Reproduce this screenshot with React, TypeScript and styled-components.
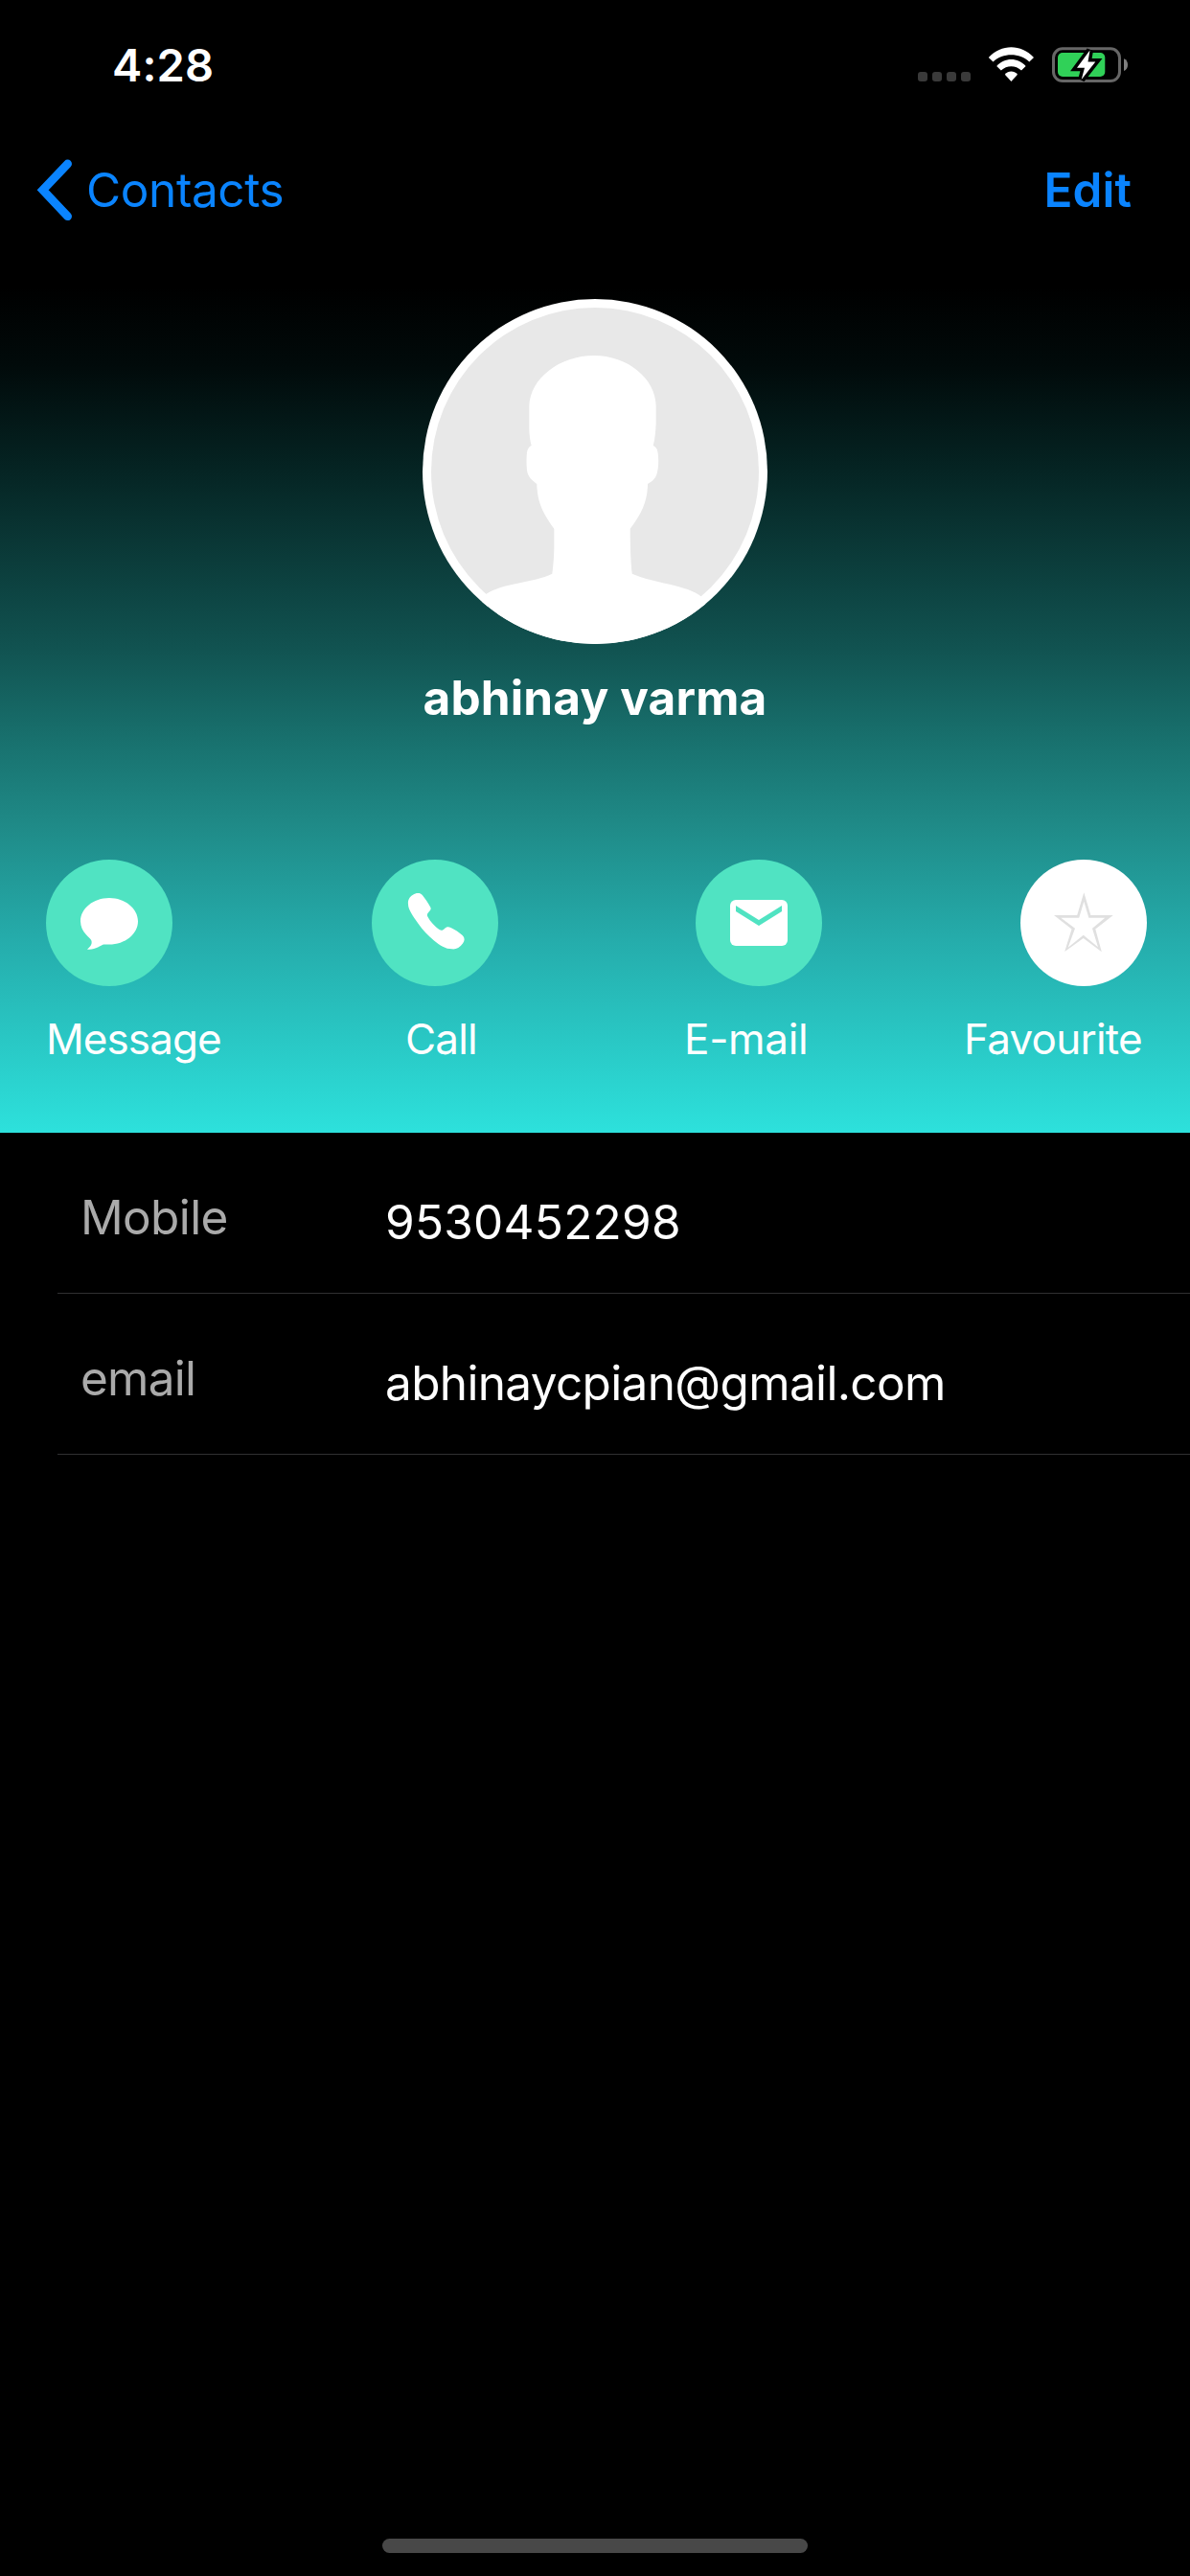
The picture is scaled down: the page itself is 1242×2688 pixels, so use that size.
import React from 'react';
import styled, { createGlobalStyle } from 'styled-components';

const GlobalStyle = createGlobalStyle`
  *, *::before, *::after { box-sizing: border-box; }
  body { margin: 0; background: #000; }
`;

const Screen = styled.main`
  display: flex;
  flex-direction: column;
  width: 1242px;
  height: 2688px;
  overflow: hidden;
  background: #000;
  color: #fff;
  font-family: Inter, "Liberation Sans", sans-serif;
`;

const Header = styled.header`
  display: flex;
  flex-direction: column;
  height: 1182px;
  background: linear-gradient(
    to bottom,
    #000 0,
    #000 300px,
    #010a0a 380px,
    #052423 490px,
    #115351 677px,
    #18706d 770px,
    #1f8a87 860px,
    #25acab 980px,
    #2de1dc 1182px
  );
`;

const StatusBar = styled.div`
  display: flex;
  justify-content: space-between;
  height: 132px;
  padding: 39px 65px 0 117px;
`;

const Time = styled.time`
  font-size: 47px;
  font-weight: 600;
  line-height: 57px;
  letter-spacing: 0.14px;
`;

const Indicators = styled.div`
  display: flex;
  align-items: flex-start;
  padding-top: 10px;
`;

const SignalDots = styled.div`
  display: flex;
  gap: 5px;
  padding-top: 26px;
  margin-right: 63px;
  margin-right: 18px;
`;

const SignalDot = styled.span`
  width: 10px;
  height: 10px;
  border-radius: 3px;
  background: #3a3a3a;
`;

const WifiSvg = styled.svg`
  display: block;
  margin: 0 18px 0 0;
`;

const Drawing = styled.svg`
  display: block;
`;

const NavBar = styled.nav`
  display: flex;
  justify-content: space-between;
  height: 132px;
  padding: 32px 61px 0 36px;
`;

const NavButton = styled.button<{ $bold?: boolean; $tracking: number }>`
  display: flex;
  align-items: flex-start;
  gap: 14px;
  height: 68px;
  padding: 0;
  border: 0;
  background: none;
  color: #0a84ff;
  font-family: inherit;
  font-size: 49.5px;
  font-weight: ${(p) => (p.$bold ? 600 : 400)};
  line-height: 60px;
  letter-spacing: ${(p) => p.$tracking}px;
`;

const NavText = styled.span`
  padding-top: 4px;
`;

const Profile = styled.section`
  display: flex;
  flex-direction: column;
  align-items: center;
  padding-top: 48px;
`;

const Avatar = styled.div`
  width: 360px;
  height: 360px;
  border-radius: 50%;
  overflow: hidden;
  background: #fff;
`;

const Name = styled.h1`
  margin: 26px 0 0;
  font-size: 49.5px;
  font-weight: 700;
  line-height: 60px;
  letter-spacing: 0.16px;
`;

const Actions = styled.div`
  display: grid;
  grid-template-columns: 340px 338px 339px 132px;
  margin: 139px 0 0 48px;
`;

const ActionButton = styled.button<{ $light?: boolean }>`
  width: 132px;
  height: 132px;
  padding: 0;
  border: 0;
  border-radius: 50%;
  background: ${(p) => (p.$light ? '#fff' : '#50e3c2')};
`;

const ActionLabels = styled.div`
  display: grid;
  grid-template-columns: 375px 291px 292px auto;
  margin: 28px 0 0 48px;
`;

const ActionLabel = styled.span<{ $tracking: number }>`
  font-size: 44px;
  line-height: 54px;
  white-space: nowrap;
  letter-spacing: ${(p) => p.$tracking}px;
`;

const Details = styled.dl`
  display: flex;
  flex-direction: column;
  flex: 1;
  margin: 0;
`;

const DetailRow = styled.div`
  display: grid;
  grid-template-columns: 318px 1fr;
  height: 168px;
  margin-left: 60px;
  padding-left: 24px;
  border-bottom: 1px solid #303032;
  font-size: 49.5px;
  line-height: 60px;
`;

const DetailLabel = styled.dt<{ $tracking: number }>`
  padding-top: 58px;
  color: #aaa;
  letter-spacing: ${(p) => p.$tracking}px;
`;

const DetailValue = styled.dd<{ $tracking: number }>`
  margin: 0;
  padding-top: 63px;
  letter-spacing: ${(p) => p.$tracking}px;
`;

const HomeArea = styled.footer`
  display: flex;
  justify-content: center;
  height: 39px;
`;

const HomeIndicator = styled.div`
  width: 444px;
  height: 15px;
  border-radius: 8px;
  background: #484848;
`;

const WifiIcon = () => (
  <WifiSvg width="49" height="37" viewBox="0 0 49 37" fill="#fff">
    <path d="M.8 11C14-3.2 34.8-3.2 48 11L43.3 15.4C33 5.9 15.8 5.9 5.5 15.4Z" />
    <path d="M9.2 20C17.5 10.7 31.3 10.7 39.6 20L35 24.6C29 18.9 19.8 18.9 13.8 24.6Z" />
    <path d="M17.8 28.8C21.5 24.4 27.3 24.4 31 28.8L24.4 36Z" />
  </WifiSvg>
);

const BatteryIcon = () => {
  const bolt = '39.5,3.5 26,21.8 34,21.8 30.7,34 45.3,15.4 37.5,15.4';
  return (
    <Drawing width="79" height="38" viewBox="0 0 79 38">
      <rect x="1.5" y="1.8" width="69" height="33.7" rx="9.5" fill="none" stroke="#666" strokeWidth="3" />
      <path d="M75 12.3C77.8 13.3 79 15.6 79 18.6S77.8 24 75 25Z" fill="#808080" />
      <rect x="6" y="6" width="49.3" height="25" rx="5" fill="#30d158" />
      <polygon points={bolt} fill="#000" stroke="#000" strokeWidth="7" strokeMiterlimit="3" />
      <polygon points={bolt} fill="#fff" />
    </Drawing>
  );
};

const BackIcon = () => (
  <Drawing width="40" height="68" viewBox="0 0 40 68">
    <path d="M34.6 7L8.7 34.3L34.6 61.7" fill="none" stroke="#0a84ff" strokeWidth="8.8" strokeLinecap="round" strokeLinejoin="miter" />
  </Drawing>
);

const Silhouette = () => (
  <Drawing width="360" height="360" viewBox="0 0 360 360">
    <circle cx="180" cy="180" r="171" fill="#e8e8e8" />
    <path
      fill="#fff"
      d="M179 59C143 59 112 83 111.3 112V134.7C111.4 142 112.2 148 113.7 153C111 154 109.5 157 109 160C108.4 165 108.3 173 109 179C110 185.5 114 189 119.3 193C119.5 213 127 225.500 137.3 239.700V261C137.200 270 136.300 279 135.300 286.700C115 296.500 84 296 66.300 308L40 360H320L291.300 310.700C276 298 242 297 218.700 286.700C217.300 275 216.700 256 216.700 239.700C229 224 235 210 235 193C240 190 244 187 245 180.500C246.500 175 246.500 165 245.500 160C245 156 243.300 154 240.700 153C242.700 146 243.300 137 243.700 129V112C243.500 83 214 59 179 59Z"
    />
  </Drawing>
);

const MessageIcon = () => (
  <Drawing width="132" height="132" viewBox="0 0 132 132" fill="#fff">
    <path d="M66 40C82.500 40 96 51 96 64.300C96 77.700 82.500 88.600 66 88.600C64 88.600 61.500 88.300 60 88.600C57 89.700 51 94.700 43 93.700C45.500 91.500 48.800 88.500 47.300 84.300C46.300 81.500 36 76 36 64.300C36 51 49.500 40 66 40Z" />
  </Drawing>
);

const PhoneIcon = () => (
  <Drawing width="132" height="132" viewBox="0 0 132 132" fill="#fff">
    <path d="M38 46.500C37.500 42 39.500 38.500 43 36.700C46 34.800 50.500 34 53 37.300C56 41 59 45.500 61.300 49.700C62 51 61.800 52 60.500 53.500C58.500 56 57 57 58.500 59.700C61 64.500 66 70 71 73.300C73 74.400 74.500 73.500 76 72C78 70 80 70 82.500 71C87 73 91 75.800 94.700 79C97.300 81.700 97.200 84.500 95 87.500C92 92 87.500 93.800 83.700 93.300C77 93.300 71 89.500 65 84.500C59 79.500 53 73.500 48.700 67C43 59 38 52 38 46.500Z" />
  </Drawing>
);

const MailIcon = () => (
  <Drawing width="132" height="132" viewBox="0 0 132 132">
    <rect x="36" y="42" width="60" height="48" rx="6" fill="#fff" />
    <path d="M42 48L66 63L90 48V54L66 69L42 54Z" fill="#50e3c2" />
  </Drawing>
);

const StarIcon = () => (
  <Drawing width="132" height="132" viewBox="0 0 132 132">
    <path
      fill="#e0e0e0"
      fillRule="evenodd"
      d="M66.300 34.300L73.400 58H96.800L78.300 72.500L84.800 96.300L65.700 82L46.200 96L53.500 72.500L35 58H59.200ZM66.300 43.700L71.400 60.700H88.300L75 71.700L81 91.300L65.700 78.700L49.700 91.700L57 71.700L42.300 60.700H61.200Z"
    />
  </Drawing>
);

const actions = [
  { label: 'Message', tracking: -0.92, icon: <MessageIcon /> },
  { label: 'Call', tracking: -0.83, icon: <PhoneIcon /> },
  { label: 'E-mail', tracking: -0.32, icon: <MailIcon /> },
  { label: 'Favourite', tracking: -0.76, icon: <StarIcon />, light: true },
];

const details = [
  { label: 'Mobile', labelTracking: -0.64, value: '9530452298', valueTracking: 0.25 },
  { label: 'email', labelTracking: -0.75, value: 'abhinaycpian@gmail.com', valueTracking: -0.65 },
];

export default function App() {
  return (
    <Screen>
      <GlobalStyle />
      <Header>
        <StatusBar>
          <Time>4:28</Time>
          <Indicators>
            <SignalDots>
              {[0, 1, 2, 3].map((dot) => (
                <SignalDot key={dot} />
              ))}
            </SignalDots>
            <WifiIcon />
            <BatteryIcon />
          </Indicators>
        </StatusBar>
        <NavBar>
          <NavButton $tracking={-0.4}>
            <BackIcon />
            <NavText>Contacts</NavText>
          </NavButton>
          <NavButton $bold $tracking={0.06}>
            <NavText>Edit</NavText>
          </NavButton>
        </NavBar>
        <Profile>
          <Avatar>
            <Silhouette />
          </Avatar>
          <Name>abhinay varma</Name>
        </Profile>
        <Actions>
          {actions.map((action) => (
            <ActionButton key={action.label} $light={action.light} aria-label={action.label}>
              {action.icon}
            </ActionButton>
          ))}
        </Actions>
        <ActionLabels>
          {actions.map((action) => (
            <ActionLabel key={action.label} $tracking={action.tracking}>
              {action.label}
            </ActionLabel>
          ))}
        </ActionLabels>
      </Header>
      <Details>
        {details.map((detail) => (
          <DetailRow key={detail.label}>
            <DetailLabel $tracking={detail.labelTracking}>{detail.label}</DetailLabel>
            <DetailValue $tracking={detail.valueTracking}>{detail.value}</DetailValue>
          </DetailRow>
        ))}
      </Details>
      <HomeArea>
        <HomeIndicator />
      </HomeArea>
    </Screen>
  );
}
